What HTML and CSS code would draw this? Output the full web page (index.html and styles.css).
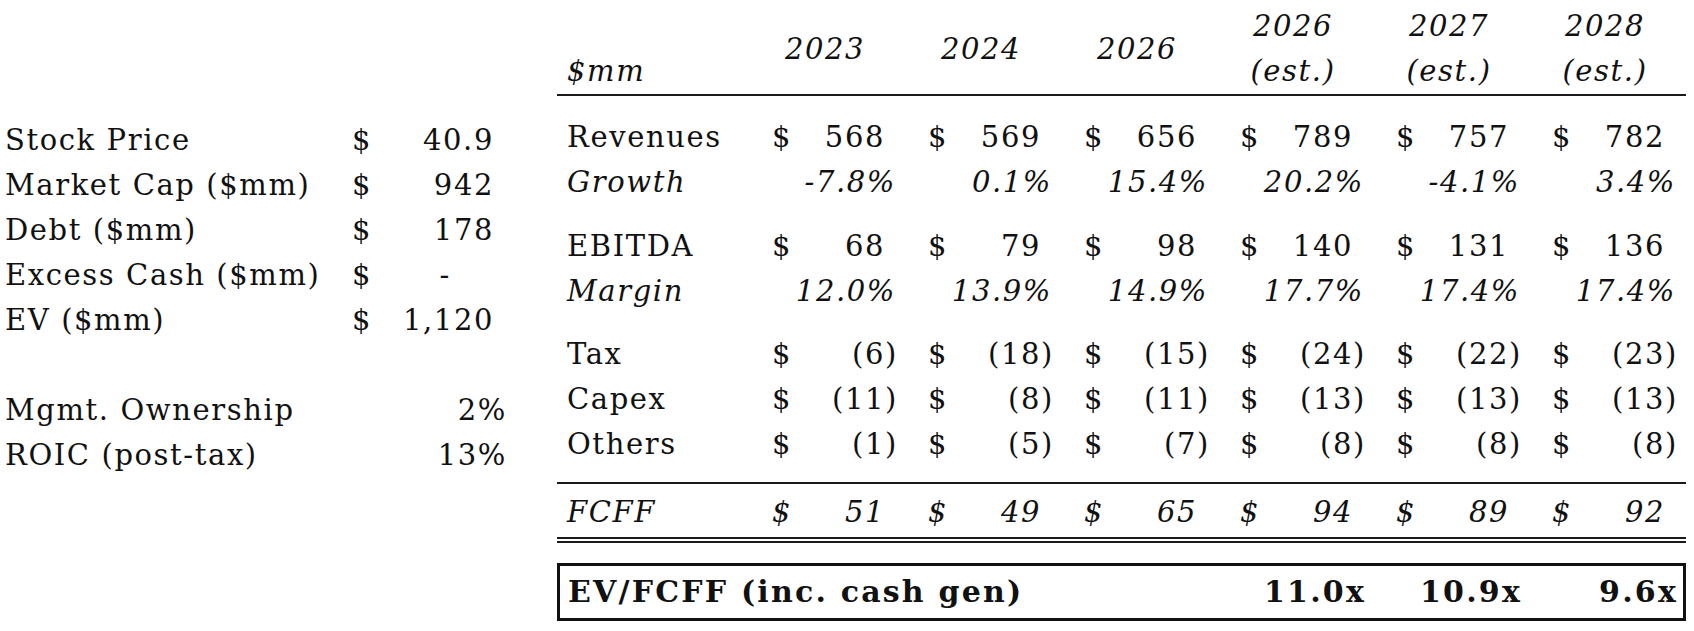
FILE: index.html
```html
<!DOCTYPE html>
<html lang="en">
<head>
<meta charset="utf-8">
<title>Valuation summary</title>
<link rel="stylesheet" href="styles.css">
</head>
<body>
<div class="page">
  <section class="summary">
    <div class="srow"><span class="lbl">Stock Price</span><span class="val"><span class="cur">$</span><span class="num">40.9</span></span></div>
    <div class="srow"><span class="lbl">Market Cap ($mm)</span><span class="val"><span class="cur">$</span><span class="num">942</span></span></div>
    <div class="srow"><span class="lbl">Debt ($mm)</span><span class="val"><span class="cur">$</span><span class="num">178</span></span></div>
    <div class="srow"><span class="lbl">Excess Cash ($mm)</span><span class="val"><span class="cur">$</span><span class="num dash">-</span></span></div>
    <div class="srow"><span class="lbl">EV ($mm)</span><span class="val"><span class="cur">$</span><span class="num">1,120</span></span></div>
    <div class="srow blank"></div>
    <div class="srow"><span class="lbl">Mgmt. Ownership</span><span class="val pct"><span class="num">2%</span></span></div>
    <div class="srow"><span class="lbl">ROIC (post-tax)</span><span class="val pct"><span class="num">13%</span></span></div>
  </section>

  <section class="model">
    <div class="thead">
      <div class="hcell unit">$mm</div>
      <div class="hcell yr">2023</div>
      <div class="hcell yr">2024</div>
      <div class="hcell yr">2026</div>
      <div class="hcell yr"><span>2026</span><span>(est.)</span></div>
      <div class="hcell yr"><span>2027</span><span>(est.)</span></div>
      <div class="hcell yr"><span>2028</span><span>(est.)</span></div>
    </div>

    <div class="trow first">
      <div class="lab">Revenues</div>
      <div class="acc"><span>$</span><span class="n">568</span></div>
      <div class="acc"><span>$</span><span class="n">569</span></div>
      <div class="acc"><span>$</span><span class="n">656</span></div>
      <div class="acc"><span>$</span><span class="n">789</span></div>
      <div class="acc"><span>$</span><span class="n">757</span></div>
      <div class="acc"><span>$</span><span class="n">782</span></div>
    </div>
    <div class="trow ital">
      <div class="lab">Growth</div>
      <div class="pc">-7.8%</div>
      <div class="pc">0.1%</div>
      <div class="pc">15.4%</div>
      <div class="pc">20.2%</div>
      <div class="pc">-4.1%</div>
      <div class="pc">3.4%</div>
    </div>

    <div class="trow sep">
      <div class="lab">EBITDA</div>
      <div class="acc"><span>$</span><span class="n">68</span></div>
      <div class="acc"><span>$</span><span class="n">79</span></div>
      <div class="acc"><span>$</span><span class="n">98</span></div>
      <div class="acc"><span>$</span><span class="n">140</span></div>
      <div class="acc"><span>$</span><span class="n">131</span></div>
      <div class="acc"><span>$</span><span class="n">136</span></div>
    </div>
    <div class="trow ital">
      <div class="lab">Margin</div>
      <div class="pc">12.0%</div>
      <div class="pc">13.9%</div>
      <div class="pc">14.9%</div>
      <div class="pc">17.7%</div>
      <div class="pc">17.4%</div>
      <div class="pc">17.4%</div>
    </div>

    <div class="trow sep2">
      <div class="lab">Tax</div>
      <div class="acc"><span>$</span><span class="n neg">(6)</span></div>
      <div class="acc"><span>$</span><span class="n neg">(18)</span></div>
      <div class="acc"><span>$</span><span class="n neg">(15)</span></div>
      <div class="acc"><span>$</span><span class="n neg">(24)</span></div>
      <div class="acc"><span>$</span><span class="n neg">(22)</span></div>
      <div class="acc"><span>$</span><span class="n neg">(23)</span></div>
    </div>
    <div class="trow">
      <div class="lab">Capex</div>
      <div class="acc"><span>$</span><span class="n neg">(11)</span></div>
      <div class="acc"><span>$</span><span class="n neg">(8)</span></div>
      <div class="acc"><span>$</span><span class="n neg">(11)</span></div>
      <div class="acc"><span>$</span><span class="n neg">(13)</span></div>
      <div class="acc"><span>$</span><span class="n neg">(13)</span></div>
      <div class="acc"><span>$</span><span class="n neg">(13)</span></div>
    </div>
    <div class="trow">
      <div class="lab">Others</div>
      <div class="acc"><span>$</span><span class="n neg">(1)</span></div>
      <div class="acc"><span>$</span><span class="n neg">(5)</span></div>
      <div class="acc"><span>$</span><span class="n neg">(7)</span></div>
      <div class="acc"><span>$</span><span class="n neg">(8)</span></div>
      <div class="acc"><span>$</span><span class="n neg">(8)</span></div>
      <div class="acc"><span>$</span><span class="n neg">(8)</span></div>
    </div>
    <div class="rule"></div>

    <div class="trow ital total">
      <div class="lab">FCFF</div>
      <div class="acc"><span>$</span><span class="n">51</span></div>
      <div class="acc"><span>$</span><span class="n">49</span></div>
      <div class="acc"><span>$</span><span class="n">65</span></div>
      <div class="acc"><span>$</span><span class="n">94</span></div>
      <div class="acc"><span>$</span><span class="n">89</span></div>
      <div class="acc"><span>$</span><span class="n">92</span></div>
    </div>

    <div class="multiple">
      <div class="mlab">EV/FCFF (inc. cash gen)</div>
      <div class="mval">11.0x</div>
      <div class="mval">10.9x</div>
      <div class="mval last">9.6x</div>
    </div>
  </section>
</div>
</body>
</html>
```

FILE: styles.css
```css
html, body {
  margin: 0;
  padding: 0;
  background: #ffffff;
}

body {
  font-family: "DejaVu Serif", "Liberation Serif", serif;
  font-size: 29px;
  letter-spacing: 1.6px;
  color: #111111;
  width: 1694px;
  height: 631px;
  overflow: hidden;
}

.page {
  display: flex;
  align-items: flex-start;
}

/* ---------- left summary ---------- */
.summary {
  width: 557px;
  flex: none;
  margin-top: 118px;
}

.srow {
  display: grid;
  grid-template-columns: 345px 165px;
  height: 45px;
  line-height: 45px;
}

.srow .lbl {
  padding-left: 5px;
  white-space: nowrap;
}

.srow .val {
  display: flex;
  justify-content: space-between;
  padding-left: 7px;
  padding-right: 16px;
}

.srow .val.pct {
  justify-content: flex-end;
  padding-right: 3px;
}

.srow .dash {
  padding-right: 43px;
}

/* ---------- right model ---------- */
.model {
  width: 1129px;
  flex: none;
}

.thead,
.trow {
  display: grid;
  grid-template-columns: 193px repeat(6, 156px);
}

.thead {
  margin-top: 4px;
  height: 90px;
  border-bottom: 2px solid #1a1a1a;
  font-style: italic;
  line-height: 45px;
}

.hcell {
  display: flex;
  flex-direction: column;
  justify-content: center;
  align-items: center;
  padding-right: 6px;
}

.hcell.unit {
  justify-content: flex-end;
  align-items: flex-start;
  padding-left: 10px;
  padding-right: 0;
}

.trow {
  height: 45px;
  line-height: 45px;
}

.trow.first { margin-top: 19px; }
.trow.sep { margin-top: 19px; }
.trow.sep2 { margin-top: 18px; }

.trow.ital { font-style: italic; }

.lab {
  padding-left: 10px;
  white-space: nowrap;
}

.acc {
  display: flex;
  justify-content: space-between;
  padding-left: 22px;
  padding-right: 21px;
}

.acc .n.neg {
  margin-right: -13px;
}

.pc {
  text-align: right;
  padding-right: 10px;
}

.rule {
  height: 15px;
  border-bottom: 2px solid #1a1a1a;
}

.trow.total {
  margin-top: 6px;
  height: 47px;
  border-bottom: 6px double #1a1a1a;
}

.multiple {
  margin-top: 20px;
  display: grid;
  grid-template-columns: 190px repeat(5, 156px) 153px;
  border: 3px solid #111111;
  height: 52px;
  line-height: 52px;
  font-size: 30px;
  font-weight: bold;
  letter-spacing: 2.2px;
}

.mlab {
  grid-column: 1 / 5;
  padding-left: 8px;
  white-space: nowrap;
}

.mval {
  text-align: right;
  padding-right: 8px;
}

.mval.last {
  padding-right: 5px;
}
```
